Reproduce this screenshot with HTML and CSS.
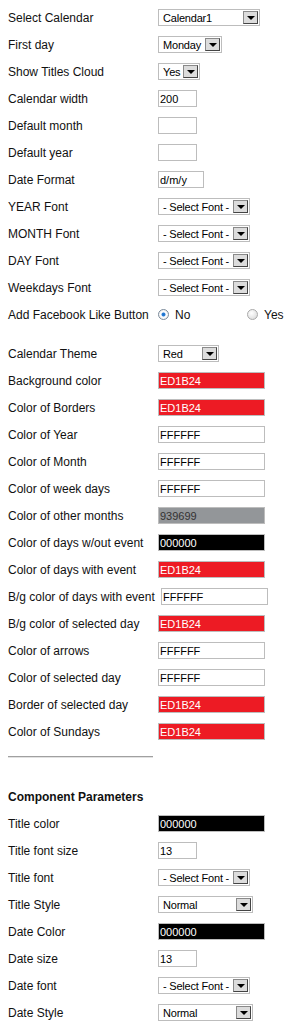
FILE: index.html
```html
<!DOCTYPE html>
<html lang="en">
<head>
    <meta charset="UTF-8">
    <title>Calendar Parameters</title>
    <link rel="stylesheet" href="styles.css">
</head>
<body>
    <div class="settings">
        <div class="row">
            <label class="name">Select Calendar</label>
            <div class="select w-cal"><span class="value">Calendar1</span><span class="arrow"></span></div>
        </div>
        <div class="row">
            <label class="name">First day</label>
            <div class="select w-day"><span class="value">Monday</span><span class="arrow"></span></div>
        </div>
        <div class="row">
            <label class="name">Show Titles Cloud</label>
            <div class="select w-yes"><span class="value">Yes</span><span class="arrow"></span></div>
        </div>
        <div class="row">
            <label class="name">Calendar width</label>
            <input class="field small" type="text" value="200">
        </div>
        <div class="row">
            <label class="name">Default month</label>
            <input class="field small" type="text" value="">
        </div>
        <div class="row">
            <label class="name">Default year</label>
            <input class="field small" type="text" value="">
        </div>
        <div class="row">
            <label class="name">Date Format</label>
            <input class="field format" type="text" value="d/m/y">
        </div>
        <div class="row">
            <label class="name">YEAR Font</label>
            <div class="select w-font"><span class="value">- Select Font -</span><span class="arrow"></span></div>
        </div>
        <div class="row">
            <label class="name">MONTH Font</label>
            <div class="select w-font"><span class="value">- Select Font -</span><span class="arrow"></span></div>
        </div>
        <div class="row">
            <label class="name">DAY Font</label>
            <div class="select w-font"><span class="value">- Select Font -</span><span class="arrow"></span></div>
        </div>
        <div class="row">
            <label class="name">Weekdays Font</label>
            <div class="select w-font"><span class="value">- Select Font -</span><span class="arrow"></span></div>
        </div>
        <div class="row">
            <label class="name">Add Facebook Like Button</label>
            <div class="radios">
                <span class="choice"><span class="radio checked"></span>No</span>
                <span class="choice"><span class="radio"></span>Yes</span>
            </div>
        </div>

        <div class="spacer"></div>

        <div class="row">
            <label class="name">Calendar Theme</label>
            <div class="select w-theme"><span class="value">Red</span><span class="arrow"></span></div>
        </div>
        <div class="row">
            <label class="name">Background color</label>
            <input class="field color red" type="text" value="ED1B24">
        </div>
        <div class="row">
            <label class="name">Color of Borders</label>
            <input class="field color red" type="text" value="ED1B24">
        </div>
        <div class="row">
            <label class="name">Color of Year</label>
            <input class="field color" type="text" value="FFFFFF">
        </div>
        <div class="row">
            <label class="name">Color of Month</label>
            <input class="field color" type="text" value="FFFFFF">
        </div>
        <div class="row">
            <label class="name">Color of week days</label>
            <input class="field color" type="text" value="FFFFFF">
        </div>
        <div class="row">
            <label class="name">Color of other months</label>
            <input class="field color grey" type="text" value="939699">
        </div>
        <div class="row">
            <label class="name">Color of days w/out event</label>
            <input class="field color black" type="text" value="000000">
        </div>
        <div class="row">
            <label class="name">Color of days with event</label>
            <input class="field color red" type="text" value="ED1B24">
        </div>
        <div class="row">
            <label class="name wide">B/g color of days with event</label>
            <input class="field color" type="text" value="FFFFFF">
        </div>
        <div class="row">
            <label class="name">B/g color of selected day</label>
            <input class="field color red" type="text" value="ED1B24">
        </div>
        <div class="row">
            <label class="name">Color of arrows</label>
            <input class="field color" type="text" value="FFFFFF">
        </div>
        <div class="row">
            <label class="name">Color of selected day</label>
            <input class="field color" type="text" value="FFFFFF">
        </div>
        <div class="row">
            <label class="name">Border of selected day</label>
            <input class="field color red" type="text" value="ED1B24">
        </div>
        <div class="row">
            <label class="name">Color of Sundays</label>
            <input class="field color red" type="text" value="ED1B24">
        </div>

        <hr class="divider">

        <div class="row">
            <strong class="heading">Component Parameters</strong>
        </div>
        <div class="row">
            <label class="name">Title color</label>
            <input class="field color black" type="text" value="000000">
        </div>
        <div class="row">
            <label class="name">Title font size</label>
            <input class="field small" type="text" value="13">
        </div>
        <div class="row">
            <label class="name">Title font</label>
            <div class="select w-font"><span class="value">- Select Font -</span><span class="arrow"></span></div>
        </div>
        <div class="row">
            <label class="name">Title Style</label>
            <div class="select w-style"><span class="value">Normal</span><span class="arrow"></span></div>
        </div>
        <div class="row">
            <label class="name">Date Color</label>
            <input class="field color black" type="text" value="000000">
        </div>
        <div class="row">
            <label class="name">Date size</label>
            <input class="field small" type="text" value="13">
        </div>
        <div class="row">
            <label class="name">Date font</label>
            <div class="select w-font"><span class="value">- Select Font -</span><span class="arrow"></span></div>
        </div>
        <div class="row">
            <label class="name">Date Style</label>
            <div class="select w-style"><span class="value">Normal</span><span class="arrow"></span></div>
        </div>
    </div>
</body>
</html>
```

FILE: styles.css
```css
body {
    margin: 4px 0 4px 8px;
    font-family: "Liberation Sans", Arial, sans-serif;
    font-size: 12px;
    color: #111;
    background: #fff;
}

.row {
    display: flex;
    align-items: center;
    height: 27px;
}

.name {
    width: 150px;
    flex-shrink: 0;
}

.name.wide {
    width: 153px;
}

.heading {
    font-weight: bold;
}

.spacer {
    height: 12px;
}

.divider {
    width: 145px;
    height: 0;
    margin: 11px 0 25px 0;
    border: 0;
    border-top: 1px solid #a0a0a0;
    border-bottom: 1px solid #e2e2e2;
}

/* text fields */
.field {
    box-sizing: border-box;
    height: 17px;
    margin: 0;
    padding: 0 1px;
    border: 1px solid #bdbdbd;
    background: #fff;
    color: #000;
    font-family: "Liberation Sans", Arial, sans-serif;
    font-size: 11px;
}

.field.small { width: 39px; }
.field.format { width: 46px; }
.field.color { width: 107px; }

.field.red { background: #ed1b24; color: #fff; }
.field.grey { background: #939699; color: #333; }
.field.black { background: #000; color: #fff; }

/* select boxes */
.select {
    display: flex;
    align-items: center;
    box-sizing: border-box;
    height: 17px;
    padding-left: 4px;
    border: 1px solid #bdbdbd;
    background: #fff;
    color: #000;
    font-size: 11px;
}

.select .value {
    flex: 1;
    overflow: hidden;
    white-space: nowrap;
    letter-spacing: -0.2px;
}

.select .arrow {
    display: flex;
    flex-shrink: 0;
    align-items: flex-end;
    justify-content: center;
    box-sizing: border-box;
    width: 15px;
    height: 13px;
    margin: 0 1px 0 2px;
    padding-bottom: 3px;
    border: 1px solid;
    border-color: #8a8a8a #444 #444 #8a8a8a;
    background: #dcdcdc;
}

.select .arrow::after {
    content: "";
    border-left: 4px solid transparent;
    border-right: 4px solid transparent;
    border-top: 4px solid #000;
}

.w-cal { width: 102px; }
.w-day { width: 64px; }
.w-yes { width: 42px; }
.w-font { width: 92px; }
.w-theme { width: 61px; }
.w-style { width: 95px; }

/* radio buttons */
.radios {
    display: flex;
    flex-shrink: 0;
}

.choice {
    display: flex;
    align-items: center;
    width: 89px;
    white-space: nowrap;
}

.choice:last-child {
    width: auto;
}

.radio {
    box-sizing: border-box;
    width: 11px;
    height: 11px;
    margin-right: 6px;
    border: 1px solid #a9a9a9;
    border-radius: 50%;
    background: radial-gradient(circle at 40% 35%, #fff 0, #e6e6e6 60%, #cfcfcf 100%);
}

.radio.checked {
    border-color: #7a8a9a;
    background: radial-gradient(circle, #1a6fc9 0, #2a7ed6 25%, #fff 38%, #e4e4e4 100%);
}
```
